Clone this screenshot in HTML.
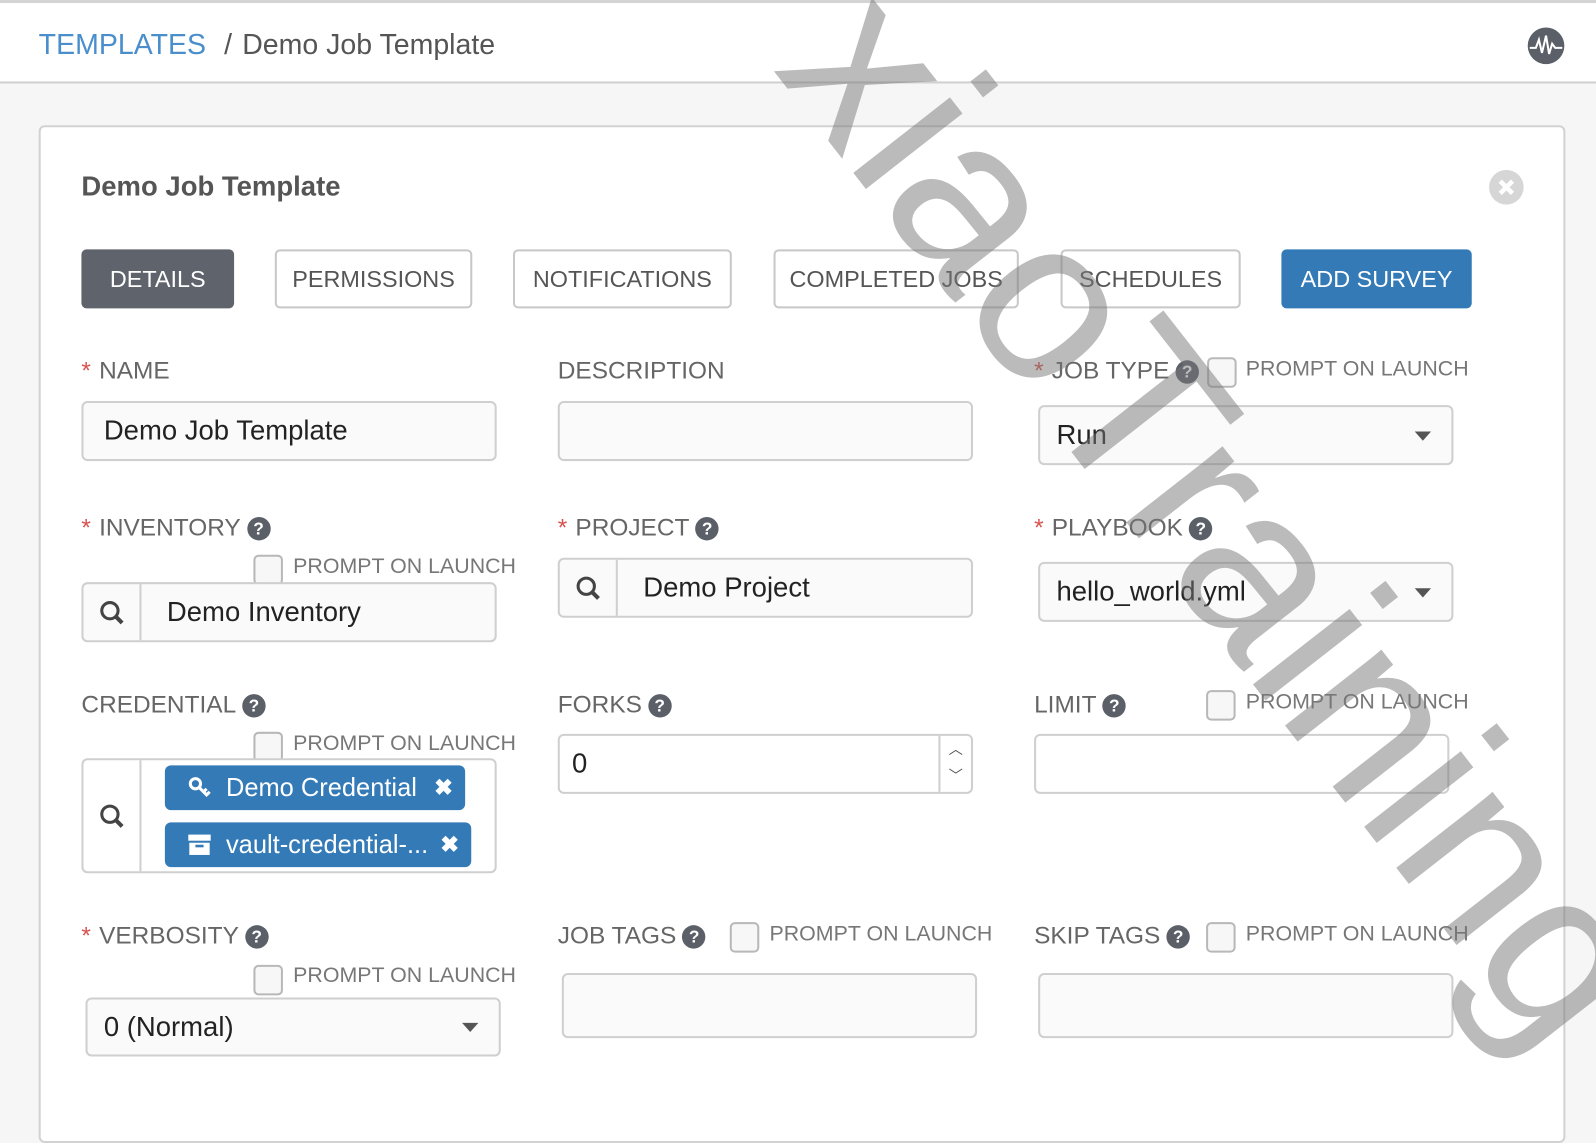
<!DOCTYPE html>
<html><head><meta charset="utf-8"><style>
*{box-sizing:border-box;margin:0;padding:0}
body{width:1596px;height:1105px;overflow:hidden;background:#f6f6f6;font-family:"Liberation Sans",sans-serif;position:relative;color:#666}
#w{position:absolute;left:0;top:0;width:1568px;height:1086px;transform:scale(1.0178);transform-origin:0 0}
.a{position:absolute}
.hdr{left:0;top:0;width:1596px;height:82px;background:#fff;border-top:3px solid #d4d4d4;border-bottom:2px solid #d0d0d0}
.card{left:38px;top:123px;width:1500px;height:1000px;background:#fff;border:2px solid #d2d2d2;border-radius:6px}
.tab{height:58px;top:245px;border:2px solid #c8c8c8;border-radius:5px;font-size:23px;color:#555;display:flex;align-items:center;justify-content:center;background:#fff}
.lbl{font-size:24px;color:#666;white-space:nowrap;line-height:28px}
.st{color:#d9534f;margin-right:8px}
.q{display:inline-block;width:23px;height:23px;border-radius:50%;background:#5a5f68;color:#fff;font-size:17px;font-weight:bold;text-align:center;line-height:23px;vertical-align:1px;margin-left:6px}
.inp{border:2px solid #cfcfcf;border-radius:6px;background:#fafafa;font-size:27px;color:#222;display:flex;align-items:center;padding-left:20px}
.cb{width:29px;height:30px;border:2px solid #b8b8b8;border-radius:5px;background:#f7f7f7}
.pl{font-size:21px;color:#777;white-space:nowrap;line-height:24px}
.car{position:absolute;right:20px;top:50%;margin-top:-4px;width:0;height:0;border-left:8px solid transparent;border-right:8px solid transparent;border-top:9px solid #555}
.srch{position:absolute;left:0;top:0;bottom:0;width:57px;border-right:2px solid #cfcfcf;display:flex;align-items:center;justify-content:center}
.tag{position:absolute;height:44px;background:#337ab7;border-radius:6px;color:#fff;font-size:25px;display:flex;align-items:center}
</style></head><body><div id="w">
<div class="a hdr"></div>
<div class="a" style="left:38px;top:28px;font-size:28px;color:#4a8fcb;white-space:nowrap">TEMPLATES <span style="color:#555;margin:0 10px">/</span><span style="color:#555">Demo Job Template</span></div>
<svg class="a" style="left:1500px;top:26px" width="38" height="38" viewBox="0 0 38 38"><circle cx="19" cy="19" r="18" fill="#5a5f68"/><path d="M3 21 L9 21 L12 13 L15 26 L19 9 L22 27 L25 17 L28 21 L35 21" stroke="#fff" stroke-width="2" fill="none"/></svg>
<div class="a card"></div>
<div class="a" style="left:80px;top:168px;font-size:27px;font-weight:bold;color:#555">Demo Job Template</div>
<svg class="a" style="left:1463px;top:167px" width="34" height="34" viewBox="0 0 34 34"><circle cx="17" cy="17" r="17" fill="#d6d6d6"/><path d="M11 11 L23 23 M23 11 L11 23" stroke="#fff" stroke-width="4.5"/></svg>

<div class="a tab" style="left:80px;width:150px;background:#5e636c;border-color:#5e636c;color:#fff">DETAILS</div>
<div class="a tab" style="left:270px;width:194px">PERMISSIONS</div>
<div class="a tab" style="left:504px;width:215px">NOTIFICATIONS</div>
<div class="a tab" style="left:760px;width:241px">COMPLETED JOBS</div>
<div class="a tab" style="left:1042px;width:177px">SCHEDULES</div>
<div class="a tab" style="left:1259px;width:187px;background:#337ab7;border-color:#337ab7;color:#fff">ADD SURVEY</div>

<div class="a lbl" style="left:80px;top:351px"><span class="st">*</span>NAME</div>
<div class="a inp" style="left:80px;top:394px;width:408px;height:59px">Demo Job Template</div>
<div class="a lbl" style="left:548px;top:351px">DESCRIPTION</div>
<div class="a inp" style="left:548px;top:394px;width:408px;height:59px"></div>
<div class="a lbl" style="left:1016px;top:351px"><span class="st">*</span>JOB TYPE<span class="q">?</span></div>
<div class="a cb" style="left:1186px;top:351px"></div>
<div class="a pl" style="left:1224px;top:351px">PROMPT ON LAUNCH</div>
<div class="a inp" style="left:1020px;top:398px;width:408px;height:59px;padding-left:16px">Run<div class="car"></div></div>

<div class="a lbl" style="left:80px;top:505px"><span class="st">*</span>INVENTORY<span class="q">?</span></div>
<div class="a cb" style="left:249px;top:545px"></div>
<div class="a pl" style="left:288px;top:545px">PROMPT ON LAUNCH</div>
<div class="a inp" style="left:80px;top:572px;width:408px;height:59px;padding-left:82px"><div class="srch"><svg width="26" height="26" viewBox="0 0 26 26"><circle cx="11" cy="11" r="8" stroke="#444" stroke-width="3" fill="none"/><path d="M17 17 L23 23" stroke="#444" stroke-width="4"/></svg></div>Demo Inventory</div>
<div class="a lbl" style="left:548px;top:505px"><span class="st">*</span>PROJECT<span class="q">?</span></div>
<div class="a inp" style="left:548px;top:548px;width:408px;height:59px;padding-left:82px"><div class="srch"><svg width="26" height="26" viewBox="0 0 26 26"><circle cx="11" cy="11" r="8" stroke="#444" stroke-width="3" fill="none"/><path d="M17 17 L23 23" stroke="#444" stroke-width="4"/></svg></div>Demo Project</div>
<div class="a lbl" style="left:1016px;top:505px"><span class="st">*</span>PLAYBOOK<span class="q">?</span></div>
<div class="a inp" style="left:1020px;top:552px;width:408px;height:59px;padding-left:16px">hello_world.yml<div class="car"></div></div>

<div class="a lbl" style="left:80px;top:679px">CREDENTIAL<span class="q">?</span></div>
<div class="a cb" style="left:249px;top:719px"></div>
<div class="a pl" style="left:288px;top:719px">PROMPT ON LAUNCH</div>
<div class="a inp" style="left:80px;top:745px;width:408px;height:113px;background:#fff"><div class="srch"><svg width="26" height="26" viewBox="0 0 26 26"><circle cx="11" cy="11" r="8" stroke="#444" stroke-width="3" fill="none"/><path d="M17 17 L23 23" stroke="#444" stroke-width="4"/></svg></div></div>
<div class="tag" style="left:162px;top:752px;width:295px"><svg style="margin-left:22px;margin-right:14px" width="24" height="24" viewBox="0 0 24 24"><circle cx="8" cy="8" r="5" stroke="#fff" stroke-width="3" fill="none"/><path d="M11 11 L20 20 M16 16 L19 13 M19 19 L22 16" stroke="#fff" stroke-width="3"/></svg>Demo Credential<span style="position:absolute;right:12px;font-weight:bold;font-size:22px">✖</span></div>
<div class="tag" style="left:162px;top:808px;width:301px"><svg style="margin-left:22px;margin-right:14px" width="24" height="24" viewBox="0 0 24 24"><rect x="1" y="2" width="22" height="6" fill="#fff"/><rect x="2" y="10" width="20" height="12" fill="#fff"/><rect x="8" y="12" width="8" height="2.5" fill="#337ab7"/></svg>vault-credential-...<span style="position:absolute;right:12px;font-weight:bold;font-size:22px">✖</span></div>
<div class="a lbl" style="left:548px;top:679px">FORKS<span class="q">?</span></div>
<div class="a inp" style="left:548px;top:721px;width:408px;height:59px;padding-left:12px;background:#fff">0<div style="position:absolute;right:0;top:0;bottom:0;width:32px;border-left:2px solid #cfcfcf;color:#555;font-size:14px;text-align:center;line-height:26px">︿<br>﹀</div></div>
<div class="a lbl" style="left:1016px;top:679px">LIMIT<span class="q">?</span></div>
<div class="a cb" style="left:1185px;top:678px"></div>
<div class="a pl" style="left:1224px;top:678px">PROMPT ON LAUNCH</div>
<div class="a inp" style="left:1016px;top:721px;width:408px;height:59px;background:#fff"></div>

<div class="a lbl" style="left:80px;top:906px"><span class="st">*</span>VERBOSITY<span class="q">?</span></div>
<div class="a cb" style="left:249px;top:948px"></div>
<div class="a pl" style="left:288px;top:947px">PROMPT ON LAUNCH</div>
<div class="a inp" style="left:84px;top:980px;width:408px;height:58px;padding-left:16px">0 (Normal)<div class="car"></div></div>
<div class="a lbl" style="left:548px;top:906px">JOB TAGS<span class="q">?</span></div>
<div class="a cb" style="left:717px;top:906px"></div>
<div class="a pl" style="left:756px;top:906px">PROMPT ON LAUNCH</div>
<div class="a inp" style="left:552px;top:956px;width:408px;height:64px"></div>
<div class="a lbl" style="left:1016px;top:906px">SKIP TAGS<span class="q">?</span></div>
<div class="a cb" style="left:1185px;top:906px"></div>
<div class="a pl" style="left:1224px;top:906px">PROMPT ON LAUNCH</div>
<div class="a inp" style="left:1020px;top:956px;width:408px;height:64px"></div>

<div class="a" style="left:1200px;top:506px;transform:translate(-50%,-50%) rotate(52deg);font-size:228px;line-height:1;white-space:nowrap;color:rgba(120,120,120,0.5)">xiaoTraining</div>
</div></body></html>
